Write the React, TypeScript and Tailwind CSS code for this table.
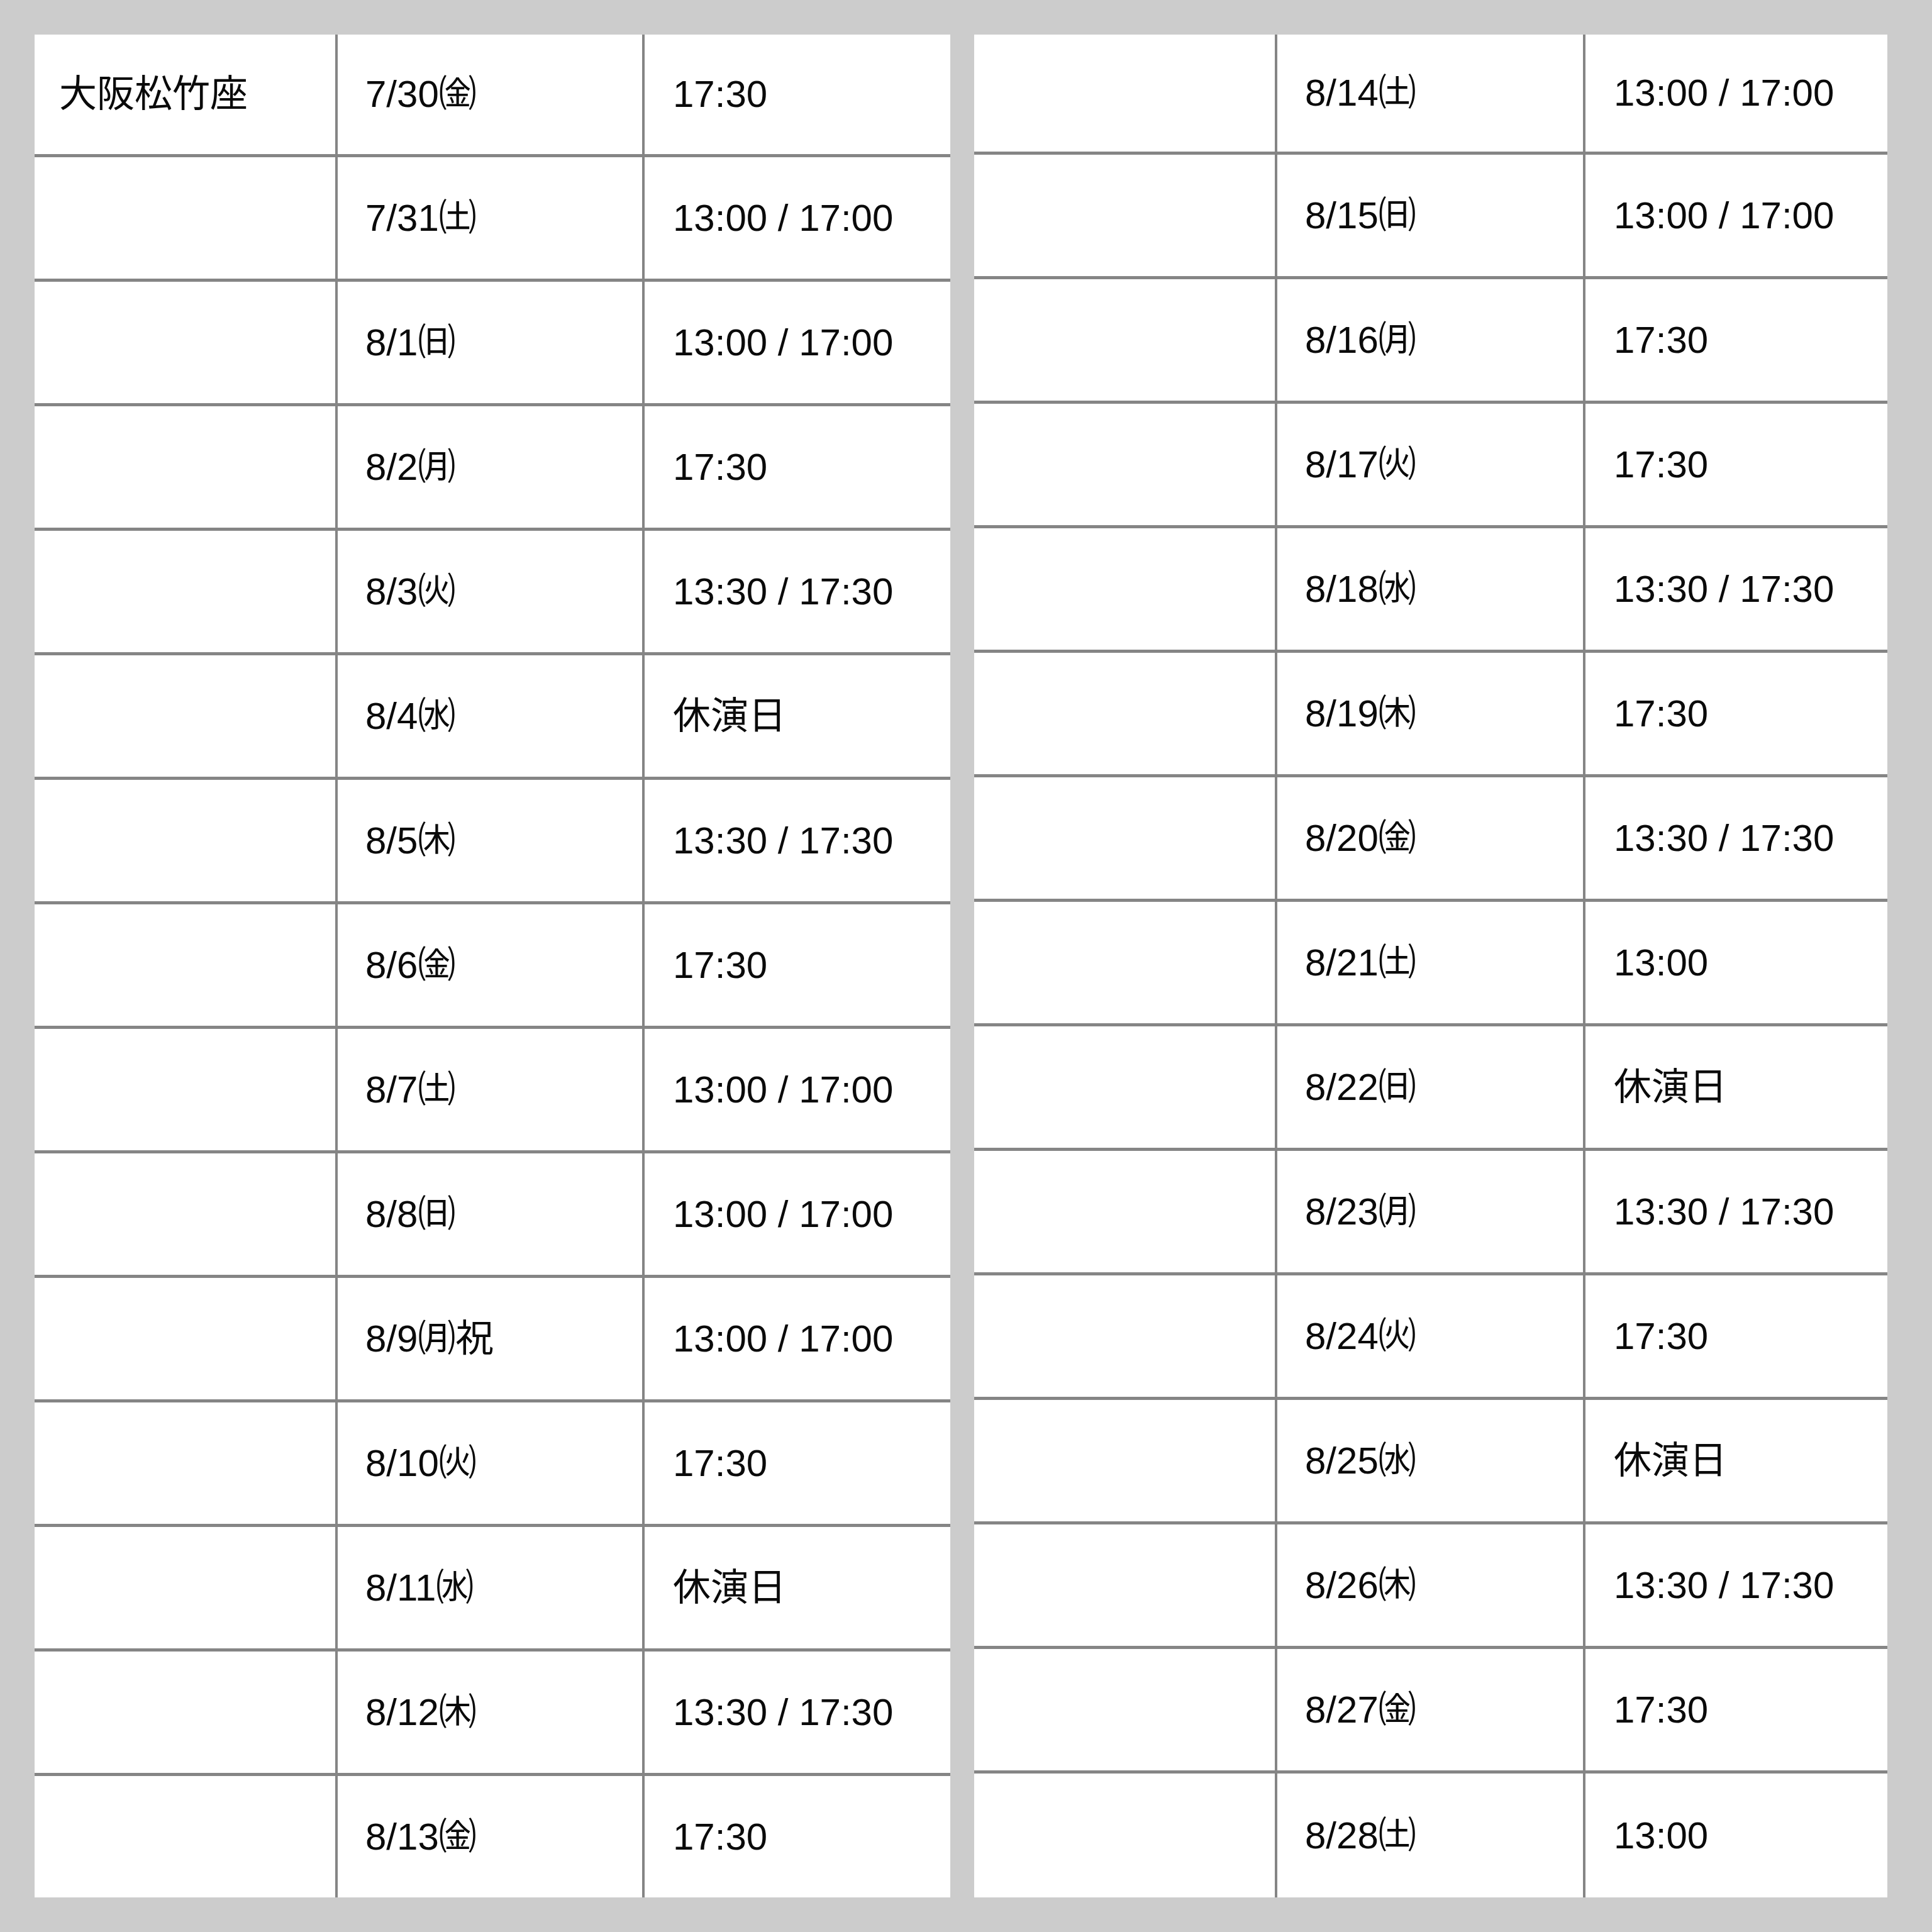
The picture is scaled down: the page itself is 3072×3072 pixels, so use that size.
import React from 'react';

type Row = { venue?: string; date: string; time: string };

const left: Row[] = [
  { venue: '大阪松竹座', date: '7/30㈮', time: '17:30' },
  { date: '7/31㈯', time: '13:00 / 17:00' },
  { date: '8/1㈰', time: '13:00 / 17:00' },
  { date: '8/2㈪', time: '17:30' },
  { date: '8/3㈫', time: '13:30 / 17:30' },
  { date: '8/4㈬', time: '休演日' },
  { date: '8/5㈭', time: '13:30 / 17:30' },
  { date: '8/6㈮', time: '17:30' },
  { date: '8/7㈯', time: '13:00 / 17:00' },
  { date: '8/8㈰', time: '13:00 / 17:00' },
  { date: '8/9㈪祝', time: '13:00 / 17:00' },
  { date: '8/10㈫', time: '17:30' },
  { date: '8/11㈬', time: '休演日' },
  { date: '8/12㈭', time: '13:30 / 17:30' },
  { date: '8/13㈮', time: '17:30' },
];

const right: Row[] = [
  { date: '8/14㈯', time: '13:00 / 17:00' },
  { date: '8/15㈰', time: '13:00 / 17:00' },
  { date: '8/16㈪', time: '17:30' },
  { date: '8/17㈫', time: '17:30' },
  { date: '8/18㈬', time: '13:30 / 17:30' },
  { date: '8/19㈭', time: '17:30' },
  { date: '8/20㈮', time: '13:30 / 17:30' },
  { date: '8/21㈯', time: '13:00' },
  { date: '8/22㈰', time: '休演日' },
  { date: '8/23㈪', time: '13:30 / 17:30' },
  { date: '8/24㈫', time: '17:30' },
  { date: '8/25㈬', time: '休演日' },
  { date: '8/26㈭', time: '13:30 / 17:30' },
  { date: '8/27㈮', time: '17:30' },
  { date: '8/28㈯', time: '13:00' },
];

function ScheduleTable({ rows, first, cols }: { rows: Row[]; first: string; cols: string }) {
  return (
    <div className="flex flex-col bg-white h-full">
      {rows.map((r, i) => (
        <div
          key={r.date}
          className={`grid ${cols} ${i === 0 ? first : i === rows.length - 1 ? 'flex-1 border-t-[5px] border-[#858585]' : 'h-[198px] border-t-[5px] border-[#858585]'}`}
        >
          <div className="flex items-center pl-[39px]">{r.venue}</div>
          <div className="flex items-center pl-[44px] border-l-4 border-[#858585]">{r.date}</div>
          <div className="flex items-center pl-[45px] border-l-4 border-[#858585]">{r.time}</div>
        </div>
      ))}
    </div>
  );
}

export default function App() {
  return (
    <div
      className="w-[3072px] h-[3072px] bg-[#cccccc] pt-[55px] pl-[55px] text-[60px] text-[#0a0a0a] leading-none"
      style={{ fontFamily: '"Liberation Sans", "Noto Sans CJK JP", sans-serif' }}
    >
      <div className="flex gap-[38px] h-[2962px]">
        <div className="w-[1456px] h-full">
          <ScheduleTable rows={left} first="h-[190px]" cols="grid-cols-[478px_488px_490px]" />
        </div>
        <div className="w-[1452px] h-full">
          <ScheduleTable rows={right} first="h-[186px]" cols="grid-cols-[478px_490px_484px]" />
        </div>
      </div>
    </div>
  );
}
